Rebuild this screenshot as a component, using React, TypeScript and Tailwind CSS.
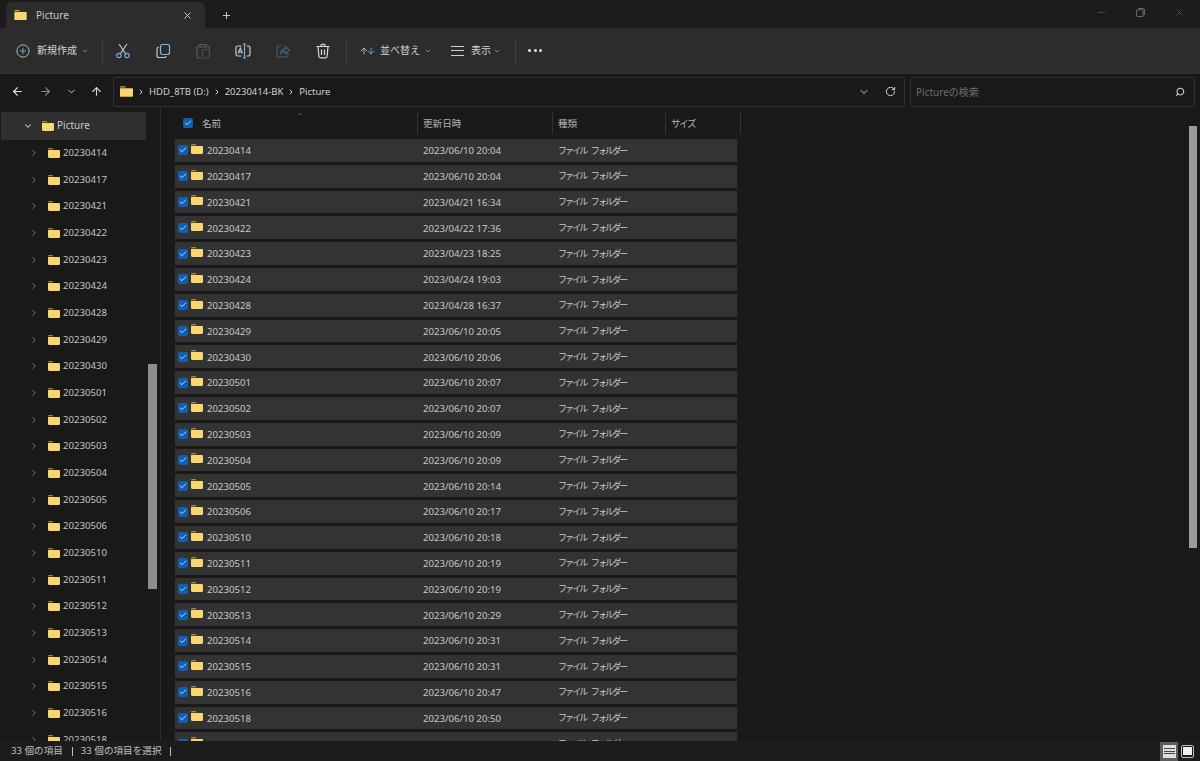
import React from 'react';
import { ArrowDown, ArrowLeft, ArrowRight, ArrowUp, ChevronDown, ChevronRight, ChevronUp, Check, Minus, Plus, RotateCw, Search, X } from 'lucide-react';

const files: [string, string][] = [
  ['20230414', '2023/06/10 20:04'],
  ['20230417', '2023/06/10 20:04'],
  ['20230421', '2023/04/21 16:34'],
  ['20230422', '2023/04/22 17:36'],
  ['20230423', '2023/04/23 18:25'],
  ['20230424', '2023/04/24 19:03'],
  ['20230428', '2023/04/28 16:37'],
  ['20230429', '2023/06/10 20:05'],
  ['20230430', '2023/06/10 20:06'],
  ['20230501', '2023/06/10 20:07'],
  ['20230502', '2023/06/10 20:07'],
  ['20230503', '2023/06/10 20:09'],
  ['20230504', '2023/06/10 20:09'],
  ['20230505', '2023/06/10 20:14'],
  ['20230506', '2023/06/10 20:17'],
  ['20230510', '2023/06/10 20:18'],
  ['20230511', '2023/06/10 20:19'],
  ['20230512', '2023/06/10 20:19'],
  ['20230513', '2023/06/10 20:29'],
  ['20230514', '2023/06/10 20:31'],
  ['20230515', '2023/06/10 20:31'],
  ['20230516', '2023/06/10 20:47'],
  ['20230518', '2023/06/10 20:50'],
  ['', ''],
];

const Folder = ({ className }: { className: string }) => (
  <svg viewBox="0 0 16 13" className={className}>
    <path d="M0 1.5C0 .7.6 0 1.4 0h3.8c.4 0 .7.2 1 .4L7.6 1.6H0z" fill="#d9a83c" />
    <path d="M0 2.6h14.6c.8 0 1.4.6 1.4 1.4v7.6c0 .8-.6 1.4-1.4 1.4H1.4C.6 13 0 12.4 0 11.6z" fill="#f8d672" />
  </svg>
);

const Checkbox = ({ className }: { className: string }) => (
  <span className={`flex items-center justify-center rounded-[2px] bg-[#0f5fb4] ${className}`}>
    <Check size={8} strokeWidth={2.5} className="text-[#e8f2ff]" />
  </span>
);

const ToolIcon = ({ children }: { children: React.ReactNode }) => (
  <svg viewBox="0 0 16 16" fill="none" strokeWidth="1.2" className="h-4 w-4 shrink-0">
    {children}
  </svg>
);

const Divider = () => <div className="h-[26px] w-px bg-[#3f3f3f]" />;

const Toolbar = () => (
  <div className="flex h-[45px] items-center bg-[#2c2c2c] pl-[16px]">
    <svg viewBox="0 0 16 16" fill="none" stroke="#c8c8c8" strokeWidth="1" className="h-[14px] w-[14px]">
      <circle cx="8" cy="8" r="7" />
      <path d="M8 4.5v7M4.5 8h7" stroke="#6fb6e6" />
    </svg>
    <span className="ml-[7px] text-[10px] text-[#d2d2d2]">新規作成</span>
    <ChevronDown size={8} className="ml-[4px] text-[#b0b0b0]" />
    <div className="ml-[13px]"><Divider /></div>
    <div className="ml-[12px] flex w-[216px] items-center gap-[24px]">
      <ToolIcon>
        <path d="M4 1l6.5 9.5M12 1L5.5 10.5" stroke="#c8c8c8" />
        <circle cx="4" cy="12.5" r="2.2" stroke="#6db2dc" />
        <circle cx="12" cy="12.5" r="2.2" stroke="#6db2dc" />
      </ToolIcon>
      <ToolIcon>
        <rect x="5.5" y="1.5" width="9" height="10" rx="2" stroke="#7bbde4" />
        <path d="M3.5 4.2A2 2 0 0 0 2 6.1v6.4a2 2 0 0 0 2 2h5.5a2 2 0 0 0 1.8-1.2" stroke="#c8c8c8" />
      </ToolIcon>
      <ToolIcon>
        <path d="M5 3H3.2A1.2 1.2 0 0 0 2 4.2v9.6A1.2 1.2 0 0 0 3.2 15H6M11 3h1.8A1.2 1.2 0 0 1 14 4.2V6M5 1.5h6V4H5z" stroke="#5a5a5a" />
        <rect x="7.5" y="6.5" width="7" height="8.5" rx="1" stroke="#4d4d4d" />
      </ToolIcon>
      <ToolIcon>
        <path d="M6.5 3H2.8A1.8 1.8 0 0 0 1 4.8v6.4A1.8 1.8 0 0 0 2.8 13h3.7M11.5 3h1.7A1.8 1.8 0 0 1 15 4.8v6.4a1.8 1.8 0 0 1-1.8 1.8h-1.7" stroke="#c8c8c8" />
        <path d="M3.2 10.5L5.3 5.2l2.1 5.3M4 9h2.6" stroke="#c8c8c8" />
        <path d="M9.5 1v14M8 1h3M8 15h3" stroke="#6db2dc" />
      </ToolIcon>
      <ToolIcon>
        <path d="M6 3H3.5A1.5 1.5 0 0 0 2 4.5v8A1.5 1.5 0 0 0 3.5 14h8a1.5 1.5 0 0 0 1.5-1.5V10" stroke="#555" />
        <path d="M5.5 10.5c.3-2.8 2.3-4.6 5-4.6V3.5l4 3.7-4 3.7V8.4c-2 0-3.6.6-5 2.1z" stroke="#3f617a" />
      </ToolIcon>
      <ToolIcon>
        <path d="M1.5 3.5h13M6 3.5V2.3A1 1 0 0 1 7 1.3h2a1 1 0 0 1 1 1v1.2M3 3.5l.9 10a1.5 1.5 0 0 0 1.5 1.3h5.2a1.5 1.5 0 0 0 1.5-1.3l.9-10M6.5 6.5v5.5M9.5 6.5v5.5" stroke="#d8d8d8" />
      </ToolIcon>
    </div>
    <div className="ml-[15px]"><Divider /></div>
    <div className="ml-[12px] flex items-center">
      <ArrowUp size={10} className="text-[#c8c8c8]" />
      <ArrowDown size={10} className="-ml-[3px] text-[#6fb6e6]" />
    </div>
    <span className="ml-[4px] text-[10px] text-[#d2d2d2]">並べ替え</span>
    <ChevronDown size={8} className="ml-[4px] text-[#b0b0b0]" />
    <div className="ml-[19px] flex h-[10px] w-[13px] flex-col justify-between">
      <div className="h-px bg-[#d0d0d0]" />
      <div className="h-px bg-[#d0d0d0]" />
      <div className="h-px bg-[#d0d0d0]" />
    </div>
    <span className="ml-[7px] text-[10px] text-[#d2d2d2]">表示</span>
    <ChevronDown size={8} className="ml-[2px] text-[#b0b0b0]" />
    <div className="ml-[14px]"><Divider /></div>
    <div className="ml-[12px] flex gap-[2.5px]">
      <span className="h-[3px] w-[3px] rounded-full bg-[#e4e4e4]" />
      <span className="h-[3px] w-[3px] rounded-full bg-[#e4e4e4]" />
      <span className="h-[3px] w-[3px] rounded-full bg-[#e4e4e4]" />
    </div>
  </div>
);

const Crumb = ({ label }: { label: string }) => (
  <>
    <ChevronRight size={8} strokeWidth={3} className="mx-[4px] text-[#d0d0d0]" />
    <span className="pt-px">{label}</span>
  </>
);

const NavBar = () => (
  <div className="flex h-[34px] items-center border-t border-[#141414] bg-[#191919]">
    <ArrowLeft size={13} className="ml-[11px] text-[#e8e8e8]" />
    <ArrowRight size={13} className="ml-[15px] text-[#8a8a8a]" />
    <ChevronDown size={11} className="ml-[14px] text-[#d8d8d8]" />
    <ArrowUp size={13} className="ml-[13px] text-[#d8d8d8]" />
    <div className="ml-[10px] flex h-[30px] w-[792px] items-center rounded-[2px] border border-[#303030] pl-[6px] pr-[8px] text-[9.5px] text-[#cfcfcf]">
      <Folder className="h-[11px] w-[13px]" />
      <Crumb label="HDD_8TB (D:)" />
      <Crumb label="20230414-BK" />
      <Crumb label="Picture" />
      <ChevronDown size={12} className="ml-auto text-[#d0d0d0]" />
      <RotateCw size={11} className="ml-[15px] text-[#e0e0e0]" />
    </div>
    <div className="ml-[5px] flex h-[30px] w-[285px] items-center rounded-[2px] border border-[#303030] pl-[5px] pr-[9px] text-[10px] text-[#6e6e6e]">
      <span className="pt-px">Pictureの検索</span>
      <Search size={10} strokeWidth={2.5} className="ml-auto -scale-x-100 text-[#cfcfcf]" />
    </div>
  </div>
);

const Sidebar = () => (
  <div className="flex w-[161px] shrink-0 border-r border-[#2c2c2c]">
    <div className="w-[146px] shrink-0 pl-px pt-[4px]">
      <div className="flex h-[27.7px] w-[145px] items-center bg-[#2f2f2f] pl-[22px] text-[10px] text-[#c8c8c8]">
        <ChevronDown size={10} strokeWidth={2.5} className="text-[#d0d0d0]" />
        <Folder className="ml-[9px] h-[10px] w-[12px]" />
        <span className="ml-[3px]">Picture</span>
      </div>
      {files.slice(0, 23).map(([name]) => (
        <div key={name} className="flex h-[26.68px] items-center pl-[28px] text-[10px] text-[#c4c4c4]">
          <ChevronRight size={10} strokeWidth={2} className="text-[#8a8a8a]" />
          <Folder className="ml-[9px] h-[10px] w-[12px]" />
          <span className="ml-[3px] text-[9.6px]">{name}</span>
        </div>
      ))}
    </div>
    <div className="ml-[2px] mt-[256px] h-[225px] w-[9px] bg-[#8d8d8d]" />
  </div>
);

const HeaderCell = ({ label, className }: { label: string; className: string }) => (
  <div className={`flex h-[22px] items-center border-r border-[#333] pl-[5px] pt-[2px] ${className}`}>{label}</div>
);

const FileList = () => (
  <div className="flex min-w-0 flex-1">
    <div className="w-[580px] shrink-0 pl-[14px]">
      <div className="relative flex h-[31px] items-start pt-[4px] text-[9.6px] text-[#b4b4b4]">
        <div className="flex h-[22px] w-[242px] items-center pl-[8px]">
          <Checkbox className="h-[10px] w-[10px]" />
          <span className="ml-[9px] pt-[2px]">名前</span>
        </div>
        <ChevronUp size={8} className="absolute left-[121px] top-[2px] text-[#777]" />
        <div className="h-[22px] w-px bg-[#333]" />
        <HeaderCell label="更新日時" className="w-[135px]" />
        <HeaderCell label="種類" className="w-[113px]" />
        <HeaderCell label="サイズ" className="w-[75px] tracking-[-1.5px]" />
      </div>
      <div className="flex flex-col gap-[3px]">
        {files.map(([name, date], i) => (
          <div key={i} className="flex h-[22.8px] w-[562px] shrink-0 items-center bg-[#333333] text-[9.6px] text-[#c8c8c8]">
            <Checkbox className="ml-[3px] h-[10px] w-[10px]" />
            <Folder className="ml-[3px] -mt-[3px] h-[10px] w-[12px]" />
            <span className="ml-[4px] w-[216px] pt-[2px]">{name}</span>
            <span className="w-[135px] pt-[2px]">{date}</span>
            <span className="text-[9px] tracking-[-1.9px] [word-spacing:4px]">ファイル フォルダー</span>
          </div>
        ))}
      </div>
    </div>
    <div className="ml-auto mr-[3px] mt-[18px] h-[422px] w-[8px] bg-[#9b9b9b]" />
  </div>
);

export default function App() {
  return (
    <div
      className="flex h-[761px] w-[1200px] flex-col overflow-hidden bg-[#191919]"
      style={{ fontFamily: '"Noto Sans", "Noto Sans CJK JP", sans-serif' }}
    >
      {/* title bar */}
      <div className="flex h-[28px] shrink-0 items-end bg-[#1c1c1c]">
        <div className="ml-[6px] flex h-[26px] w-[199px] items-center rounded-t-[6px] bg-[#2c2c2c] pl-[8px] pr-[12px] text-[10px] text-[#c8c8c8]">
          <Folder className="h-[10px] w-[13px]" />
          <span className="ml-[9px]">Picture</span>
          <X size={11} className="ml-auto text-[#d8d8d8]" />
        </div>
        <Plus size={11} className="mb-[7px] ml-[16px] text-[#d8d8d8]" />
        <div className="mb-[10px] ml-auto flex items-center">
          <Minus size={11} strokeWidth={1} className="text-[#777]" />
          <svg viewBox="0 0 10 10" fill="none" stroke="#777" className="ml-[29px] h-[9px] w-[9px]">
            <rect x=".5" y="2" width="7.5" height="7.5" rx="1.5" />
            <path d="M2.5.5h5a2 2 0 0 1 2 2v5" />
          </svg>
          <X size={11} strokeWidth={1} className="ml-[29px] mr-[15px] text-[#777]" />
        </div>
      </div>
      <div className="shrink-0"><Toolbar /></div>
      <div className="h-[1px] shrink-0 bg-[#333]" />
      <div className="shrink-0"><NavBar /></div>
      <div className="flex min-h-0 flex-1 overflow-hidden">
        <Sidebar />
        <FileList />
      </div>
      {/* status bar */}
      <div className="flex h-[20px] shrink-0 items-center bg-[#1c1c1c] pl-[11px] text-[9.6px] text-[#c0c0c0]">
        <span>33 個の項目</span>
        <span className="ml-[9px] h-[9px] w-px bg-[#c0c0c0]" />
        <span className="ml-[8px]">33 個の項目を選択</span>
        <span className="ml-[8px] h-[9px] w-px bg-[#c0c0c0]" />
        <div className="ml-auto flex h-[19px] w-[18px] items-center justify-center bg-[#5d5d5d]">
          <div className="flex h-[13px] w-[13px] flex-col justify-center gap-[1.5px] bg-[#dedede] px-px">
            <span className="h-px bg-[#444]" />
            <span className="h-px bg-[#444]" />
            <span className="h-px bg-[#444]" />
          </div>
        </div>
        <div className="ml-[3px] mr-[6px] flex h-[13px] w-[13px] items-center justify-center rounded-[2px] border border-[#bdbdbd]">
          <span className="h-[8px] w-[9px] bg-[#eeeeee]" />
        </div>
      </div>
    </div>
  );
}
